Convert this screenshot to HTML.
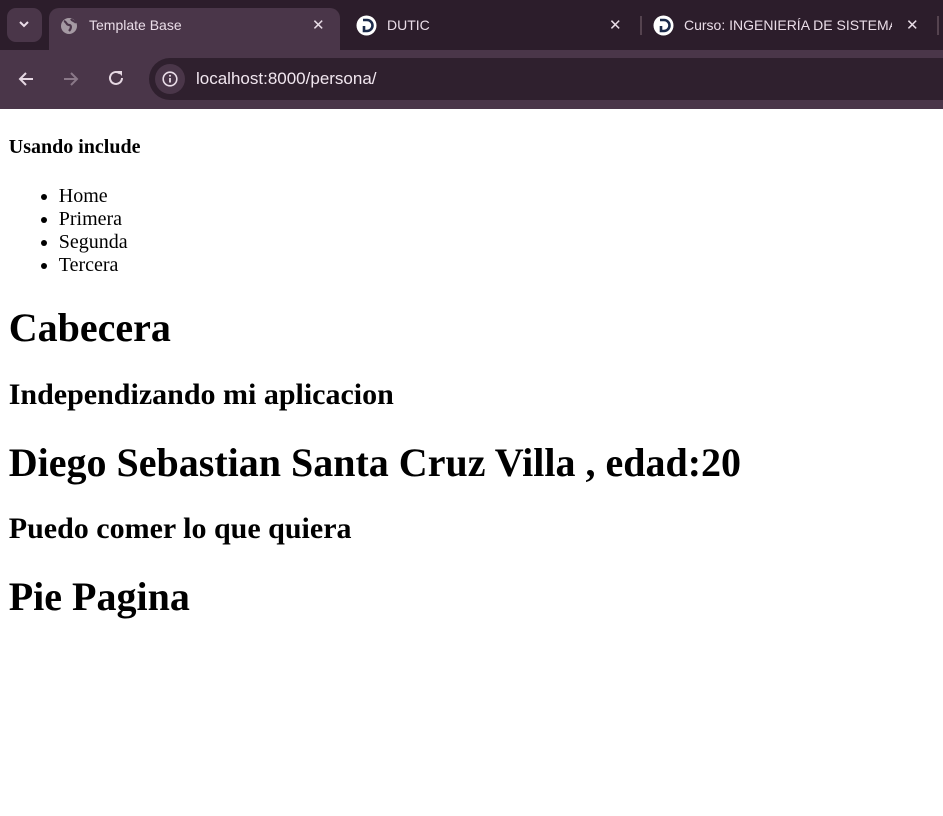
<!DOCTYPE html>
<html><head><meta charset="utf-8">
<style>
html,body{margin:0;padding:0;width:943px;height:816px;overflow:hidden;background:#fff}
.chrome{position:absolute;left:0;top:0;width:943px;height:109px;background:#2c1d2b;font-family:"Liberation Sans",sans-serif}
.toolbar{position:absolute;left:0;top:50px;width:943px;height:59px;background:#4a3649}
.tab{position:absolute;top:8px;height:42px;background:#4a3649;border-radius:10px 10px 0 0}
.tabtxt{position:absolute;top:17px;font-size:14px;color:#eadde8;white-space:nowrap}
.x{position:absolute;top:16px;font-size:15px;color:#e8dce6}
.omni{position:absolute;left:149px;top:58px;width:820px;height:42px;background:#2f202e;border-radius:21px}
.content{zoom:1.25;position:absolute;top:87.2px;left:0;right:0;font-family:"Liberation Serif",serif;color:#000}
.content .in{margin:0 7px}
</style></head><body>
<div class="chrome">
  <div style="position:absolute;left:7px;top:8px;width:35px;height:34px;background:#4a3649;border-radius:9px"></div>
  <svg style="position:absolute;left:18px;top:19px" width="12" height="10" viewBox="0 0 12 10"><path d="M2 3l4 4 4-4" stroke="#eadde8" stroke-width="2" fill="none"/></svg>
  <div class="tab" style="left:49px;width:291px"></div>
  <svg style="position:absolute;left:60px;top:17px" width="18" height="18" viewBox="0 0 18 18"><circle cx="9" cy="9" r="8" fill="#a59aa3"/><path d="M4 4c3 1 2 4 5 4s2 4 0 6M11 2c1 2 4 2 5 4" stroke="#4a3649" stroke-width="2.2" fill="none"/></svg>
  <div class="tabtxt" style="left:89px">Template Base</div>
  <div class="x" style="left:312px">✕</div>
  <svg style="position:absolute;left:356px;top:15px" width="21" height="21" viewBox="0 0 21 21"><circle cx="10.5" cy="10.5" r="10" fill="#fff"/><path d="M7 5h4a5.5 5.5 0 010 11H8v-5" stroke="#1b2a4a" stroke-width="2.6" fill="none"/></svg>
  <div class="tabtxt" style="left:387px">DUTIC</div>
  <div class="x" style="left:609px">✕</div>
  <div style="position:absolute;left:640px;top:16px;width:2px;height:19px;background:#55434f"></div>
  <svg style="position:absolute;left:653px;top:15px" width="21" height="21" viewBox="0 0 21 21"><circle cx="10.5" cy="10.5" r="10" fill="#fff"/><path d="M7 5h4a5.5 5.5 0 010 11H8v-5" stroke="#1b2a4a" stroke-width="2.6" fill="none"/></svg>
  <div class="tabtxt" style="left:684px;width:208px;overflow:hidden">Curso: INGENIERÍA DE SISTEMAS</div>
  <div class="x" style="left:906px">✕</div>
  <div style="position:absolute;left:937px;top:16px;width:2px;height:19px;background:#55434f"></div>
  <div class="toolbar"></div>
  <svg style="position:absolute;left:17px;top:70px" width="18" height="18" viewBox="0 0 18 18"><path d="M16 9H3M9 3L3 9l6 6" stroke="#e6d8e3" stroke-width="2" fill="none"/></svg>
  <svg style="position:absolute;left:62px;top:70px" width="18" height="18" viewBox="0 0 18 18"><path d="M2 9h13M9 3l6 6-6 6" stroke="#8a7888" stroke-width="2" fill="none"/></svg>
  <svg style="position:absolute;left:107px;top:69px" width="18" height="18" viewBox="0 0 18 18"><path d="M15 9a6 6 0 11-2-4.5" stroke="#e6d8e3" stroke-width="2" fill="none"/><path d="M10 2h5v5z" fill="#e6d8e3"/></svg>
  <div class="omni"></div>
  <div style="position:absolute;left:155px;top:64px;width:30px;height:30px;border-radius:15px;background:#4a3649"></div>
  <svg style="position:absolute;left:162px;top:71px" width="16" height="16" viewBox="0 0 16 16"><circle cx="8" cy="8" r="6.8" stroke="#eadde8" stroke-width="1.6" fill="none"/><path d="M8 7v4.5" stroke="#eadde8" stroke-width="1.8"/><circle cx="8" cy="4.7" r="1" fill="#eadde8"/></svg>
  <div style="position:absolute;left:196px;top:69px;font-size:17px;color:#f1e6ef">localhost:8000/persona/</div>
</div>
<div class="content"><div class="in">
<h4>Usando include</h4>
<ul><li>Home</li><li>Primera</li><li>Segunda</li><li>Tercera</li></ul>
<h1>Cabecera</h1>
<h2>Independizando mi aplicacion</h2>
<h1>Diego Sebastian Santa Cruz Villa , edad:20</h1>
<h2>Puedo comer lo que quiera</h2>
<h1>Pie Pagina</h1>
</div></div>
</body></html>
